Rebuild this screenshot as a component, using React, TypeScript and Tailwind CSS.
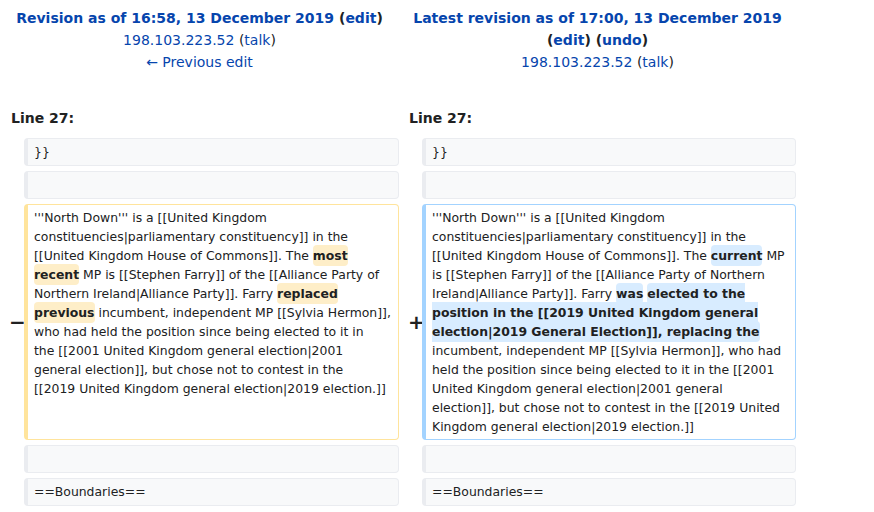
import React from "react";

const font = { fontFamily: '"DejaVu Sans", Verdana, sans-serif' };

function Del({ children }: { children: React.ReactNode }) {
  return <span className="font-bold bg-[#feeec8] rounded-[4px] py-[3px]">{children}</span>;
}
function Ins({ children }: { children: React.ReactNode }) {
  return <span className="font-bold bg-[#d8ecff] rounded-[4px] py-[3px]">{children}</span>;
}

function Ctx({ children }: { children?: React.ReactNode }) {
  return (
    <div className="h-[28px] bg-[#f8f9fa] border border-[#eaecf0] border-l-4 rounded-[4px] px-[6px] py-[3px] text-[12.42px] leading-[19px] text-[#202122] whitespace-pre-wrap">
      {children}
    </div>
  );
}

export default function App() {
  return (
    <div style={font} className="w-[874px] h-[512px] bg-white text-[#202122] overflow-hidden">
      <div className="grid grid-cols-[24px_375px_23px_374px] gap-y-[5px] items-center">
        {/* Headers */}
        <div className="col-span-2 text-center text-[14px] leading-[22px] pt-[7px] self-start">
          <div className="font-bold">
            <a className="text-[#0645ad]">Revision as of 16:58, 13 December 2019</a> (<a className="text-[#0645ad]">edit</a>)
          </div>
          <div>
            <a className="text-[#0645ad]">198.103.223.52</a> (<a className="text-[#0645ad]">talk</a>)
          </div>
          <div>
            <a className="text-[#0645ad]">← Previous edit</a>
          </div>
        </div>
        <div className="col-span-2 text-center text-[14px] leading-[22px] pt-[7px] self-start">
          <div className="font-bold">
            <a className="text-[#0645ad]">Latest revision as of 17:00, 13 December 2019</a>
            <br />
            (<a className="text-[#0645ad]">edit</a>) (<a className="text-[#0645ad]">undo</a>)
          </div>
          <div>
            <a className="text-[#0645ad]">198.103.223.52</a> (<a className="text-[#0645ad]">talk</a>)
          </div>
        </div>

        {/* Line numbers */}
        <div className="col-span-2 font-bold text-[14px] leading-[22px] pl-[11px] pt-[29px] pb-[4px]">Line 27:</div>
        <div className="col-span-2 font-bold text-[14px] leading-[22px] pl-[10px] pt-[29px] pb-[4px]">Line 27:</div>

        {/* Row }} */}
        <div />
        <Ctx>{"}}"}</Ctx>
        <div />
        <Ctx>{"}}"}</Ctx>

        {/* Empty row */}
        <div />
        <Ctx />
        <div />
        <Ctx />

        {/* Changed row */}
        <div className="pl-[9px] font-bold text-[20px] leading-none">−</div>
        <div className="self-stretch border border-[#ffe49c] border-l-4 rounded-[4px] px-[6px] py-[3px] text-[12.42px] leading-[19px] text-[#202122] bg-white">
          '''North Down''' is a [[United Kingdom constituencies|parliamentary constituency]] in the [[United Kingdom House of Commons]]. The <Del>most</Del> <Del>recent</Del> MP is [[Stephen Farry]] of the [[Alliance Party of Northern Ireland|Alliance Party]]. Farry <Del>replaced</Del> <Del>previous</Del> incumbent, independent MP [[Sylvia Hermon]], who had held the position since being elected to it in<br />the [[2001 United Kingdom general election|2001 general election]], but chose not to contest in the<br />[[2019 United Kingdom general election|2019 election.]]
        </div>
        <div className="pl-[9px] font-bold text-[20px] leading-none">+</div>
        <div className="border border-[#a3d3ff] border-l-4 rounded-[4px] px-[6px] py-[3px] text-[12.42px] leading-[19px] text-[#202122] bg-white">
          '''North Down''' is a [[United Kingdom constituencies|parliamentary constituency]] in the [[United Kingdom House of Commons]]. The <Ins>current</Ins> MP is [[Stephen Farry]] of the [[Alliance Party of Northern Ireland|Alliance Party]]. Farry <Ins>was</Ins> <Ins>elected to the position in the [[2019 United Kingdom general election|2019 General Election]], replacing the</Ins> incumbent, independent MP [[Sylvia Hermon]], who had held the position since being elected to it in the [[2001 United Kingdom general election|2001 general election]], but chose not to contest in the [[2019 United Kingdom general election|2019 election.]]
        </div>

        {/* Empty row */}
        <div />
        <Ctx />
        <div />
        <Ctx />

        {/* Boundaries */}
        <div />
        <Ctx>==Boundaries==</Ctx>
        <div />
        <Ctx>==Boundaries==</Ctx>
      </div>
    </div>
  );
}
